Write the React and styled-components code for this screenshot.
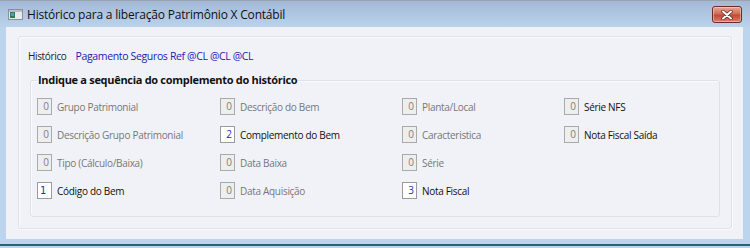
import React from "react";
import styled, { createGlobalStyle } from "styled-components";

const Global = createGlobalStyle`
  html, body { margin: 0; padding: 0; background: #bcd3ea; }
  body { font-family: "Open Sans", "Noto Sans", sans-serif; }
`;

const Window = styled.div`
  width: 750px;
  height: 248px;
  box-sizing: border-box;
  display: flex;
  flex-direction: column;
  background: #bcd4ec;
  border-top: 1px solid #9aa3ad;
  overflow: hidden;
`;

const TitleBar = styled.div`
  height: 26px;
  flex: none;
  display: flex;
  align-items: center;
  padding: 0 8px 0 8px;
  background: linear-gradient(#a2bad7, #b4cbe5 70%, #bad2ea);
`;

const TitleText = styled.span`
  margin-left: 4px;
  font-family: "Open Sans", sans-serif;
  font-size: 12px;
  color: #111;
  letter-spacing: -0.2px;
  flex: 1;
`;

const CloseButton = styled.div`
  width: 28px;
  height: 15px;
  border: 1px solid #6e2a25;
  border-radius: 3px;
  background: linear-gradient(#e8a898, #d06c58 45%, #c24a34 55%, #d8806a);
  display: flex;
  align-items: center;
  justify-content: center;
  box-shadow: inset 0 0 0 1px rgba(255, 220, 210, 0.5);
  margin-top: 1px;
`;

const Client = styled.div`
  flex: 1;
  margin: 0 7px 5px 6px;
  background: #f0f2f8;
  display: flex;
  padding: 9px 11px 10px 12px;
`;

const BottomEdge = styled.div`
  height: 2px;
  flex: none;
  background: #2a6272;
  margin-bottom: 2px;
`;

const OuterGroup = styled.div`
  flex: 1;
  border: 1px solid #dde1e9;
  box-shadow: inset 1px 1px 0 #fafbfd, 1px 1px 0 #fafbfd;
  border-radius: 3px;
  padding: 11px;
  display: flex;
  flex-direction: column;
`;

const HistRow = styled.div`
  display: flex;
  align-items: center;
  height: 16px;
  margin-left: -2px;
  gap: 9px;
  letter-spacing: -0.35px;
`;

const HistLabel = styled.span`
  font-size: 10px;
  color: #222;
`;

const HistValue = styled.span`
  font-size: 10.5px;
  color: #2222b0;
`;

const InnerGroup = styled.fieldset`
  margin: 9px 0 0 0;
  padding: 11px 6px 0 6px;
  border: 1px solid #dde1e9;
  border-radius: 3px;
  box-shadow: inset 1px 1px 0 #fafbfd;
  min-width: 0;
  flex: 1;
`;

const Legend = styled.legend`
  font-size: 11px;
  font-weight: 700;
  color: #111;
  padding: 0 1px;
  margin-left: 0;
  line-height: 14px;
  letter-spacing: -0.3px;
`;

const Grid = styled.div`
  display: grid;
  grid-template-columns: 183px 182px 162px 1fr;
  grid-template-rows: repeat(4, 17px);
  grid-auto-flow: column;
  row-gap: 11px;
`;

const Item = styled.div`
  display: flex;
  align-items: center;
  gap: 5px;
`;

const SeqBox = styled.div`
  width: ${(p) => (p.$align === "left" ? "9px" : "11px")};
  height: 15px;
  border: 1px solid ${(p) => (p.$active ? "#9a9a9a" : "#aaaaaa")};
  background: ${(p) => (p.$active ? "#ffffff" : "#eeeeee")};
  line-height: 15px;
  color: ${(p) => (p.$active ? "#2a2ab8" : "#808080")};
  text-align: ${(p) => p.$align || "right"};
  padding: 0 2px 0 ${(p) => (p.$align === "left" ? "2px" : "0")};
  box-sizing: content-box;
  font-family: ${(p) => (p.$align === "left" ? '"DejaVu Sans Mono", monospace' : "inherit")};
  font-size: 10px;
`;

const ItemLabel = styled.span`
  font-size: 10px;
  color: ${(p) => (p.$enabled ? "#111" : "#777")};
  white-space: nowrap;
  letter-spacing: -0.3px;
`;

const items = [
  { label: "Grupo Patrimonial", value: "0" },
  { label: "Descrição Grupo Patrimonial", value: "0" },
  { label: "Tipo (Cálculo/Baixa)", value: "0" },
  { label: "Código do Bem", value: "1", active: true, enabled: true, align: "left" },
  { label: "Descrição do Bem", value: "0" },
  { label: "Complemento do Bem", value: "2", active: true, enabled: true },
  { label: "Data Baixa", value: "0" },
  { label: "Data Aquisição", value: "0" },
  { label: "Planta/Local", value: "0" },
  { label: "Caracteristica", value: "0" },
  { label: "Série", value: "0" },
  { label: "Nota Fiscal", value: "3", active: true, enabled: true },
  { label: "Série NFS", value: "0", enabled: true },
  { label: "Nota Fiscal Saída", value: "0", enabled: true },
];

function AppIcon() {
  return (
    <svg width="15" height="11" viewBox="0 0 15 11">
      <rect x="0.5" y="0.5" width="14" height="10" fill="#e8eaec" stroke="#8a9098" />
      <rect x="1" y="1" width="13" height="2" fill="#b8bec6" />
      <rect x="2" y="3" width="5" height="6" fill="#2f7a5a" />
      <rect x="3" y="4" width="3" height="3" fill="#4aa0c8" />
    </svg>
  );
}

function CloseIcon() {
  return (
    <svg width="12" height="10" viewBox="0 0 12 10">
      <path d="M2 1.5 L10 8.5 M10 1.5 L2 8.5" stroke="#5a2420" strokeWidth="3.4" strokeLinecap="round" />
      <path d="M2 1.5 L10 8.5 M10 1.5 L2 8.5" stroke="#ffffff" strokeWidth="2" strokeLinecap="round" />
    </svg>
  );
}

export default function App() {
  return (
    <>
      <Global />
      <Window>
        <TitleBar>
          <AppIcon />
          <TitleText>Histórico para a liberação Patrimônio X Contábil</TitleText>
          <CloseButton>
            <CloseIcon />
          </CloseButton>
        </TitleBar>
        <Client>
          <OuterGroup>
            <HistRow>
              <HistLabel>Histórico</HistLabel>
              <HistValue>Pagamento Seguros Ref @CL @CL @CL</HistValue>
            </HistRow>
            <InnerGroup>
              <Legend>Indique a sequência do complemento do histórico</Legend>
              <Grid>
                {items.map((it) => (
                  <Item key={it.label}>
                    <SeqBox $active={it.active} $align={it.align}>
                      {it.value}
                    </SeqBox>
                    <ItemLabel $enabled={it.enabled}>{it.label}</ItemLabel>
                  </Item>
                ))}
              </Grid>
            </InnerGroup>
          </OuterGroup>
        </Client>
        <BottomEdge />
      </Window>
    </>
  );
}
